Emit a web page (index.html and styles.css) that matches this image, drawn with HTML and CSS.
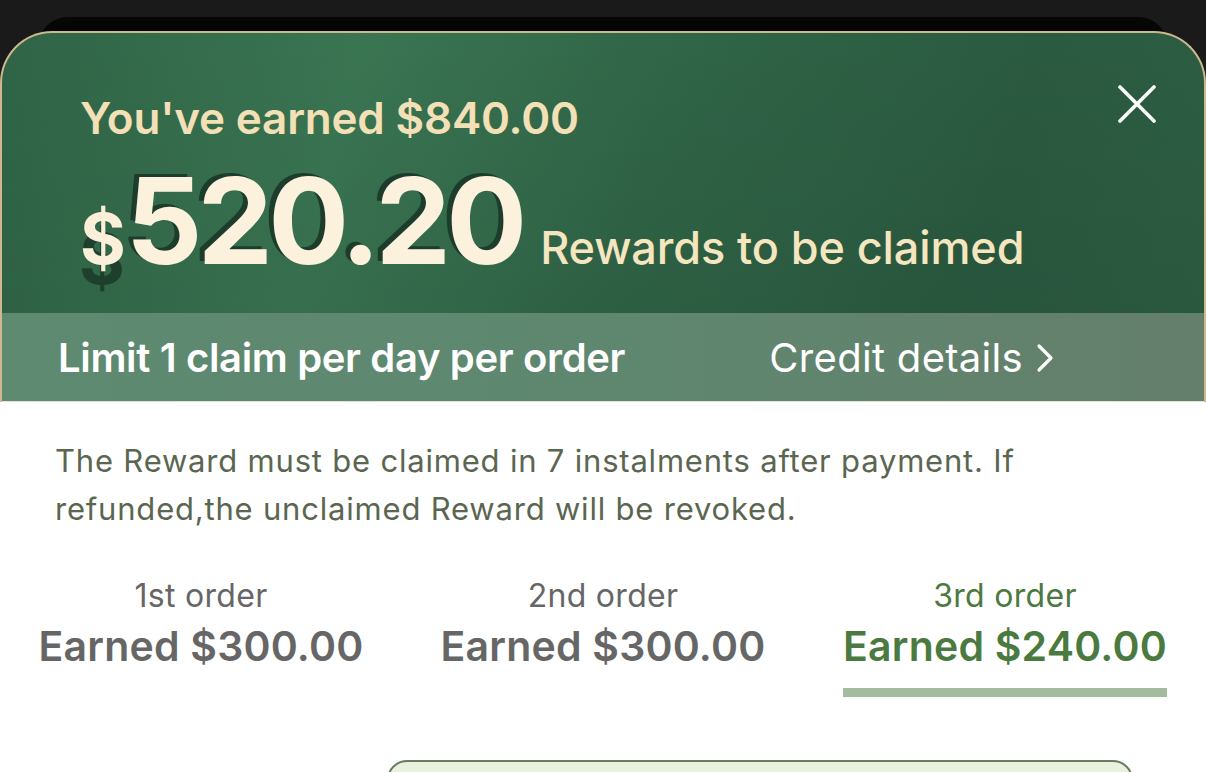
FILE: index.html
```html
<!DOCTYPE html>
<html>
<head>
<meta charset="utf-8">
<link rel="stylesheet" href="styles.css">
</head>
<body>
<div class="back"></div>
<div class="card">
  <div class="header">
    <div class="earned-total">You've earned $840.00</div>
    <div class="amount-row">
      <span class="cur">$</span><span class="amount">520.20</span><span class="amount-label">Rewards to be claimed</span>
    </div>
    <svg class="close" width="38" height="38" viewBox="0 0 38 38"><path d="M2 2 L36 36 M36 2 L2 36" stroke="#ffffff" stroke-width="3.6" stroke-linecap="round" fill="none"/></svg>
  </div>
  <div class="band">
    <span class="limit">Limit 1 claim per day per order</span>
    <span class="credit">Credit details<svg class="chev" width="20" height="30" viewBox="0 0 20 30"><path d="M4 3 L16 15 L4 27" stroke="#ffffff" stroke-width="3.2" stroke-linecap="round" stroke-linejoin="round" fill="none"/></svg></span>
  </div>
</div>
<div class="body">
  <p class="note">The Reward must be claimed in 7 instalments after payment. If refunded,the unclaimed Reward will be revoked.</p>
  <div class="tabs">
    <div class="tab"><div class="tab-inner"><div class="tab-label">1st order</div><div class="tab-value">Earned $300.00</div></div></div>
    <div class="tab"><div class="tab-inner"><div class="tab-label">2nd order</div><div class="tab-value">Earned $300.00</div></div></div>
    <div class="tab active"><div class="tab-inner"><div class="tab-label">3rd order</div><div class="tab-value">Earned $240.00</div><div class="tab-bar"></div></div></div>
  </div>
  <div class="box"></div>
</div>
</body>
</html>
```
FILE: styles.css
```css
* { box-sizing: border-box; }
html, body { margin: 0; padding: 0; }
html { height: 772px; overflow: hidden; }
body {
  background: #ffffff;
  font-family: Inter, "Noto Sans", sans-serif;
  width: 1206px;
  height: 772px;
  overflow: hidden;
  position: relative;
}
body::before {
  content: "";
  position: absolute;
  left: 0; top: 0; right: 0; height: 120px;
  background: #1a1a1a;
  z-index: -1;
}
.back {
  margin: 17px 38px 0;
  height: 30px;
  border-radius: 40px 40px 0 0;
  background: #060606;
}
.card {
  position: relative;
  margin-top: -16px;
  border: 2px solid #cdb98d;
  border-bottom: none;
  border-radius: 52px 52px 0 0;
  overflow: hidden;
  background: linear-gradient(105deg, #2f6446 0%, #3a7552 28%, #306547 52%, #2a5a40 80%, #2d5e43 100%);
}
.header {
  position: relative;
  height: 280px;
  padding: 63px 0 0 78px;
  background: linear-gradient(180deg, rgba(255,255,255,0.0) 0%, rgba(0,0,0,0.06) 100%);
}
.earned-total {
  font-size: 44px;
  line-height: 44px;
  font-weight: 600;
  color: #f3e0b6;
  letter-spacing: -0.2px;
}
.amount-row {
  margin-top: 21px;
  display: flex;
  align-items: baseline;
  line-height: 1;
}
.cur {
  font-size: 70px;
  font-weight: 700;
  color: #fbefd9;
  text-shadow: -1px 20px 0 #1d3f2c;
}
.amount {
  font-size: 120px;
  font-weight: 700;
  color: #fcf1dd;
  letter-spacing: -5px;
  text-shadow: -5px -3px 0 #1c3d2b;
}
.amount-label {
  margin-left: 18px;
  font-size: 45px;
  font-weight: 500;
  color: #f6e6c0;
  letter-spacing: -0.1px;
}
.close {
  position: absolute;
  right: 48px;
  top: 52px;
}
.band {
  height: 89px;
  display: flex;
  align-items: center;
  justify-content: space-between;
  padding: 0 149px 0 56px;
  background: linear-gradient(90deg, #5d8a71 0%, #5f876f 50%, #647f6c 100%);
  color: #ffffff;
  border-bottom: 1px solid #dfe6d6;
}
.limit {
  font-size: 40px;
  font-weight: 600;
  letter-spacing: -0.35px;
}
.credit {
  display: flex;
  align-items: center;
  font-size: 40px;
  font-weight: 400;
  letter-spacing: 0.3px;
}
.chev { margin-left: 12px; margin-top: 2px; }
.note {
  margin: 35px 55px 0;
  font-size: 31px;
  line-height: 48px;
  color: #5b6651;
  font-weight: 400;
  letter-spacing: 0.8px;
  width: 1000px;
}
.tabs {
  margin-top: 45px;
  display: grid;
  grid-template-columns: 1fr 1fr 1fr;
}
.tab {
  display: flex;
  justify-content: center;
  color: #666666;
}
.tab-inner {
  display: flex;
  flex-direction: column;
  align-items: center;
}
.tab-label {
  font-size: 32px;
  line-height: 36px;
  letter-spacing: 0.3px;
}
.tab-value {
  margin-top: 8px;
  font-size: 41px;
  line-height: 48px;
  font-weight: 600;
  letter-spacing: 0.2px;
}
.tab.active { color: #4b7a40; }
.tab-bar {
  margin-top: 18px;
  align-self: stretch;
  height: 9px;
  background: #a3bc9e;
}
.tab:not(.active) .tab-inner { padding-bottom: 27px; }
.box {
  margin: 63px 0 0 387px;
  width: 746px;
  height: 40px;
  border: 2px solid #6d7a5e;
  border-radius: 20px;
  background: #e7f1de;
}
```
